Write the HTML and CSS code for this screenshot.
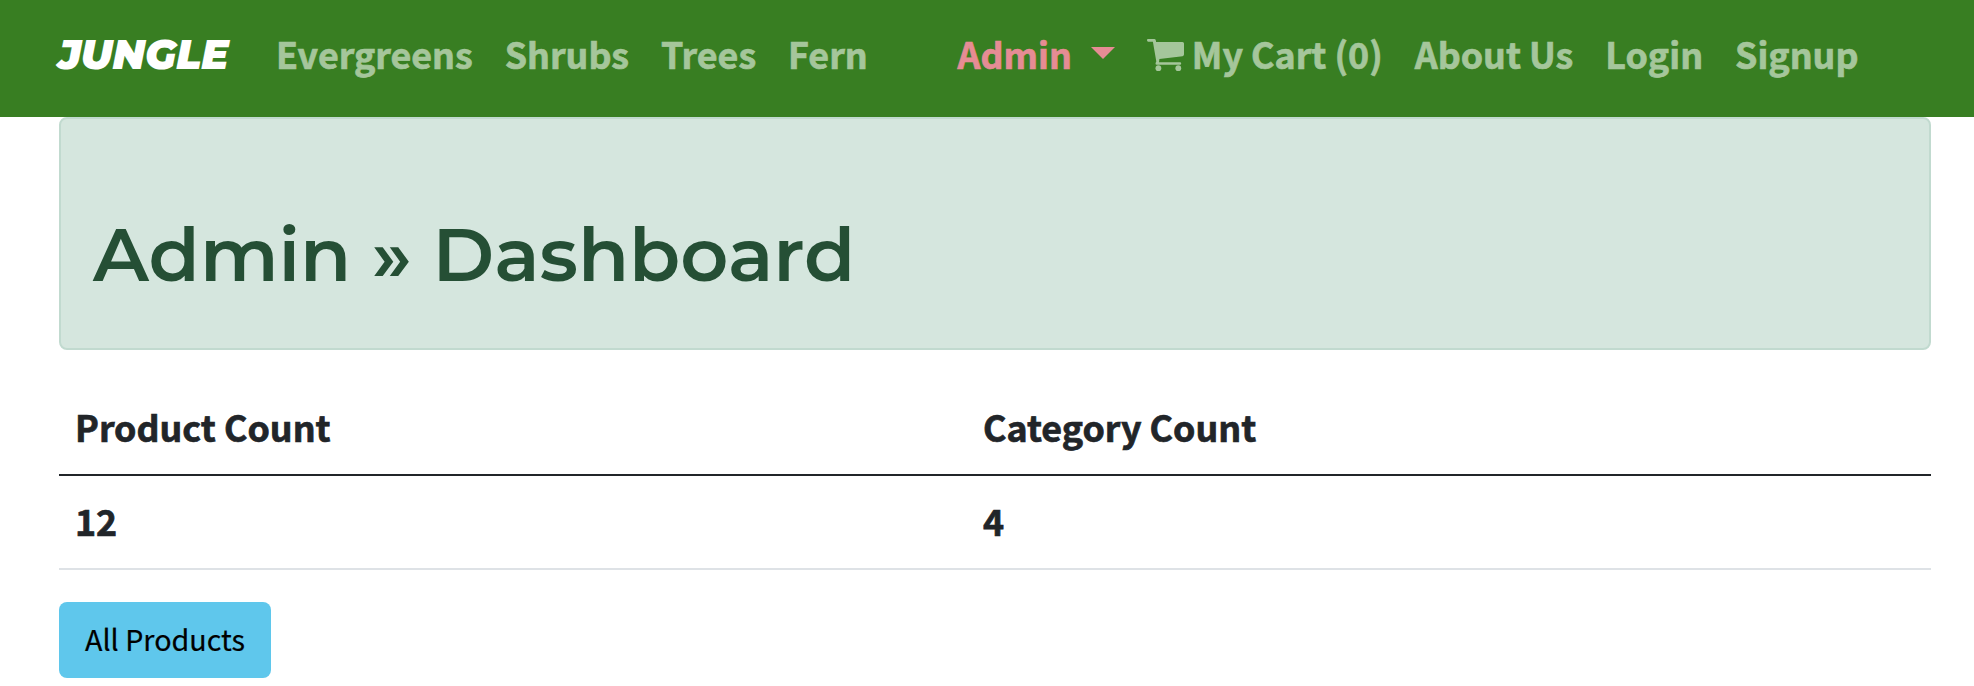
FILE: index.html
```html
<!DOCTYPE html>
<html lang="en">
<head>
<meta charset="utf-8">
<title>Jungle</title>
<link rel="stylesheet" href="styles.css">
</head>
<body>
<nav class="navbar">
  <a class="brand">JUNGLE</a>
  <div class="links categories">
    <a class="link">Evergreens</a>
    <a class="link">Shrubs</a>
    <a class="link">Trees</a>
    <a class="link">Fern</a>
  </div>
  <div class="links">
    <a class="link admin">Admin<span class="caret"></span></a>
    <a class="link cart"><svg class="cart-icon" viewBox="0 0 37 33" aria-hidden="true"><path d="M1.2 0H7.2Q8.5 0 8.8 1.3L9.1 3H35.5Q37 3 37 4.5V15.6Q37 17 35.6 17.2L12.4 20L12 23.3H33Q34.2 23.3 34.2 24.5T33 25.7H9.7Q8.5 25.7 8.5 24.5Q8.5 23.8 9.3 22.4L5.9 2.7H1.2Q0 2.7 0 1.3T1.2 0Z"/><circle cx="11.4" cy="29.2" r="2.9"/><circle cx="31.3" cy="29.2" r="2.9"/></svg>My Cart (0)</a>
    <a class="link">About Us</a>
    <a class="link">Login</a>
    <a class="link">Signup</a>
  </div>
</nav>
<main class="container">
  <header class="banner"><h1 class="title">Admin » Dashboard</h1></header>
  <table class="table">
    <thead><tr><th class="first">Product Count</th><th>Category Count</th></tr></thead>
    <tbody><tr><td>12</td><td>4</td></tr></tbody>
  </table>
  <a class="button">All Products</a>
</main>
</body>
</html>
```
FILE: styles.css
```css
* { box-sizing: border-box; }
body {
  margin: 0;
  background: #fff;
  color: #212529;
  font-family: "Noto Sans CJK JP", sans-serif;
  font-size: 35.8px;
  font-weight: 700;
  line-height: 60px;
}
.navbar {
  display: flex;
  align-items: center;
  height: 117px;
  padding: 0 0 12px 58px;
  background: #387e22;
  white-space: nowrap;
}
.brand {
  width: 202px;
  color: #fff;
  font-family: Montserrat, Inter, sans-serif;
  font-size: 40.6px;
  font-style: italic;
  font-weight: 900;
  padding-top: 4px;
}
.links { display: flex; }
.categories { width: 681.5px; }
.link {
  padding: 0 16px;
  color: #a5c69b;
  -webkit-text-stroke: .7px currentColor;
}
.link.admin { color: #e68c94; }
.caret {
  display: inline-block;
  margin-left: 19px;
  border: 12px solid transparent;
  border-top-color: #e68c94;
  border-bottom: 0;
  vertical-align: 10px;
}
.cart { display: flex; align-items: center; }
.cart-icon { width: 37px; height: 33px; margin: 5px 8px 0 0; fill: #a5c69b; }
.container { width: 1872px; margin-left: 59px; }
.banner {
  height: 233px;
  padding: 91px 32px 0;
  border: 2px solid #c1dacf;
  border-radius: 8px;
  background: #d5e6de;
  color: #254f35;
}
.title {
  margin: 0;
  font-family: Montserrat, Inter, sans-serif;
  font-size: 74.7px;
  font-weight: 600;
  line-height: 90px;
}
.table { width: 100%; margin: 32px 0; border-collapse: separate; border-spacing: 0; }
.table th, .table td {
  height: 94px;
  padding: 0 16px 4px;
  text-align: left;
  vertical-align: middle;
  border-bottom: 2px solid #dee2e6;
  -webkit-text-stroke: .7px currentColor;
}
.table th { border-color: #212529; }
.table .first { width: 908px; }
.button {
  display: flex;
  align-items: center;
  justify-content: center;
  width: 212px;
  height: 76px;
  padding-bottom: 2px;
  border-radius: 8px;
  background: #5fc7ec;
  color: #000;
  font-size: 28.7px;
  font-weight: 400;
  -webkit-text-stroke: .2px currentColor;
}
```
